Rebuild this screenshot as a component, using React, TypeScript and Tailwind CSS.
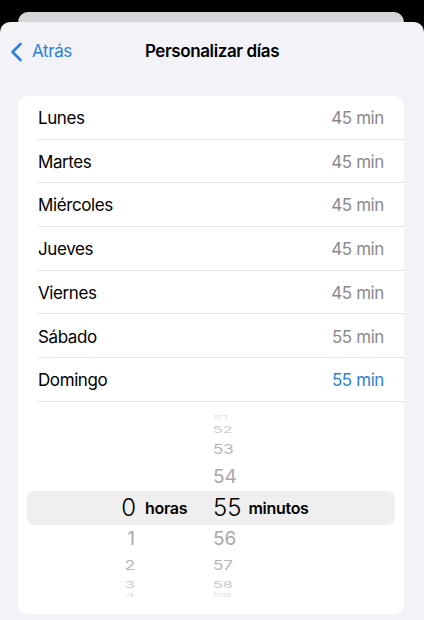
import React from "react";

const days = [
    { name: "Lunes", value: "45 min" },
    { name: "Martes", value: "45 min" },
    { name: "Miércoles", value: "45 min" },
    { name: "Jueves", value: "45 min" },
    { name: "Viernes", value: "45 min" },
    { name: "Sábado", value: "55 min" },
    { name: "Domingo", value: "55 min", active: true },
];

// picker rows, top to bottom (the wheel squeezes items near its edges)
const wheel = [
    { h: "", m: "51", row: "h-[12px]", text: "text-[15px] scale-y-[0.3] text-[#dedee1]" },
    { h: "", m: "52", row: "h-[13px]", text: "text-[16px] scale-y-[0.55] text-[#c9c9cd]" },
    { h: "", m: "53", row: "h-[26px]", text: "text-[17px] scale-y-[0.8] text-[#b4b4b8]" },
    { h: "", m: "54", row: "h-[28px]", text: "text-[19px] scale-y-[0.95] text-[#a7a7ab]" },
    { h: "1", m: "56", row: "h-[28px]", text: "text-[19px] scale-y-[0.95] text-[#a7a7ab]" },
    { h: "2", m: "57", row: "h-[26px]", text: "text-[17px] scale-y-[0.8] text-[#b4b4b8]" },
    { h: "3", m: "58", row: "h-[12px]", text: "text-[16px] scale-y-[0.55] text-[#c9c9cd]" },
    { h: "4", m: "59", row: "h-[10px]", text: "text-[15px] scale-y-[0.3] text-[#dedee1]" },
];

function WheelRow({ item }: { item: (typeof wheel)[number] }) {
    return (
        <div className={`flex items-center ${item.row}`}>
            <div className="w-[117px] flex justify-end">
                <span className={`inline-block leading-none ${item.text}`}>{item.h}</span>
            </div>
            <div className="w-[78px]" />
            <div className="flex">
                <span className={`inline-block leading-none ${item.text}`}>{item.m}</span>
            </div>
        </div>
    );
}

export default function App() {
    return (
        <div
            className="w-[424px] h-[620px] bg-black overflow-hidden flex flex-col"
            style={{ fontFamily: "Inter, 'Noto Sans', sans-serif" }}
        >
            {/* card peeking behind the sheet */}
            <div className="ml-[18px] mr-[20px] mt-[12px] h-[14px] rounded-t-[10px] bg-[#d6d6da] shrink-0" />

            {/* Sheet */}
            <div className="-mt-[4px] flex-1 rounded-t-[10px] bg-[#f2f2f7] flex flex-col">
                <div className="relative h-[56px] pt-[3px] flex items-center justify-center shrink-0">
                    <div className="absolute left-[10px] top-[3px] bottom-0 flex items-center gap-[9px] text-[#2f7fe0]">
                        <svg width="13" height="20" viewBox="0 0 13 20" fill="none">
                            <path d="M10.5 2 L2.5 10 L10.5 18" stroke="currentColor" strokeWidth="2.6" strokeLinecap="round" strokeLinejoin="round" />
                        </svg>
                        <span className="text-[17px] tracking-[-0.4px]">Atrás</span>
                    </div>
                    <h1 className="text-[17px] font-semibold tracking-[-0.4px] text-black">Personalizar días</h1>
                </div>

                <div className="ml-[18px] mr-[20px] mt-[18px] bg-white rounded-[10px] overflow-hidden">
                    {days.map((d) => (
                        <div key={d.name} className="ml-5 h-[43.7px] pt-[3px] border-b border-[#e4e4e7] flex items-center justify-between pr-5">
                            <span className="text-[17px] tracking-[-0.4px] text-black">{d.name}</span>
                            <span className={`text-[17px] tracking-[-0.4px] ${d.active ? "text-[#2f7fd0]" : "text-[#8a8a8e]"}`}>
                                {d.value}
                            </span>
                        </div>
                    ))}

                    {/* Duration picker */}
                    <div className="pt-[10px] pb-[13px]">
                        {wheel.slice(0, 4).map((w) => (
                            <WheelRow key={w.m} item={w} />
                        ))}
                        <div className="mx-[9px] h-[34px] rounded-[8px] bg-[#efeff0] flex items-center text-black">
                            <div className="w-[109px] flex justify-end">
                                <span className="text-[24px] font-light leading-none">0</span>
                            </div>
                            <span className="ml-[9px] w-[68px] text-[16px] font-semibold tracking-[-0.3px]">horas</span>
                            <span className="text-[24px] font-light leading-none">55</span>
                            <span className="ml-[7px] text-[16px] font-semibold tracking-[-0.3px]">minutos</span>
                        </div>
                        {wheel.slice(4).map((w) => (
                            <WheelRow key={w.m} item={w} />
                        ))}
                    </div>
                </div>
            </div>
        </div>
    );
}
